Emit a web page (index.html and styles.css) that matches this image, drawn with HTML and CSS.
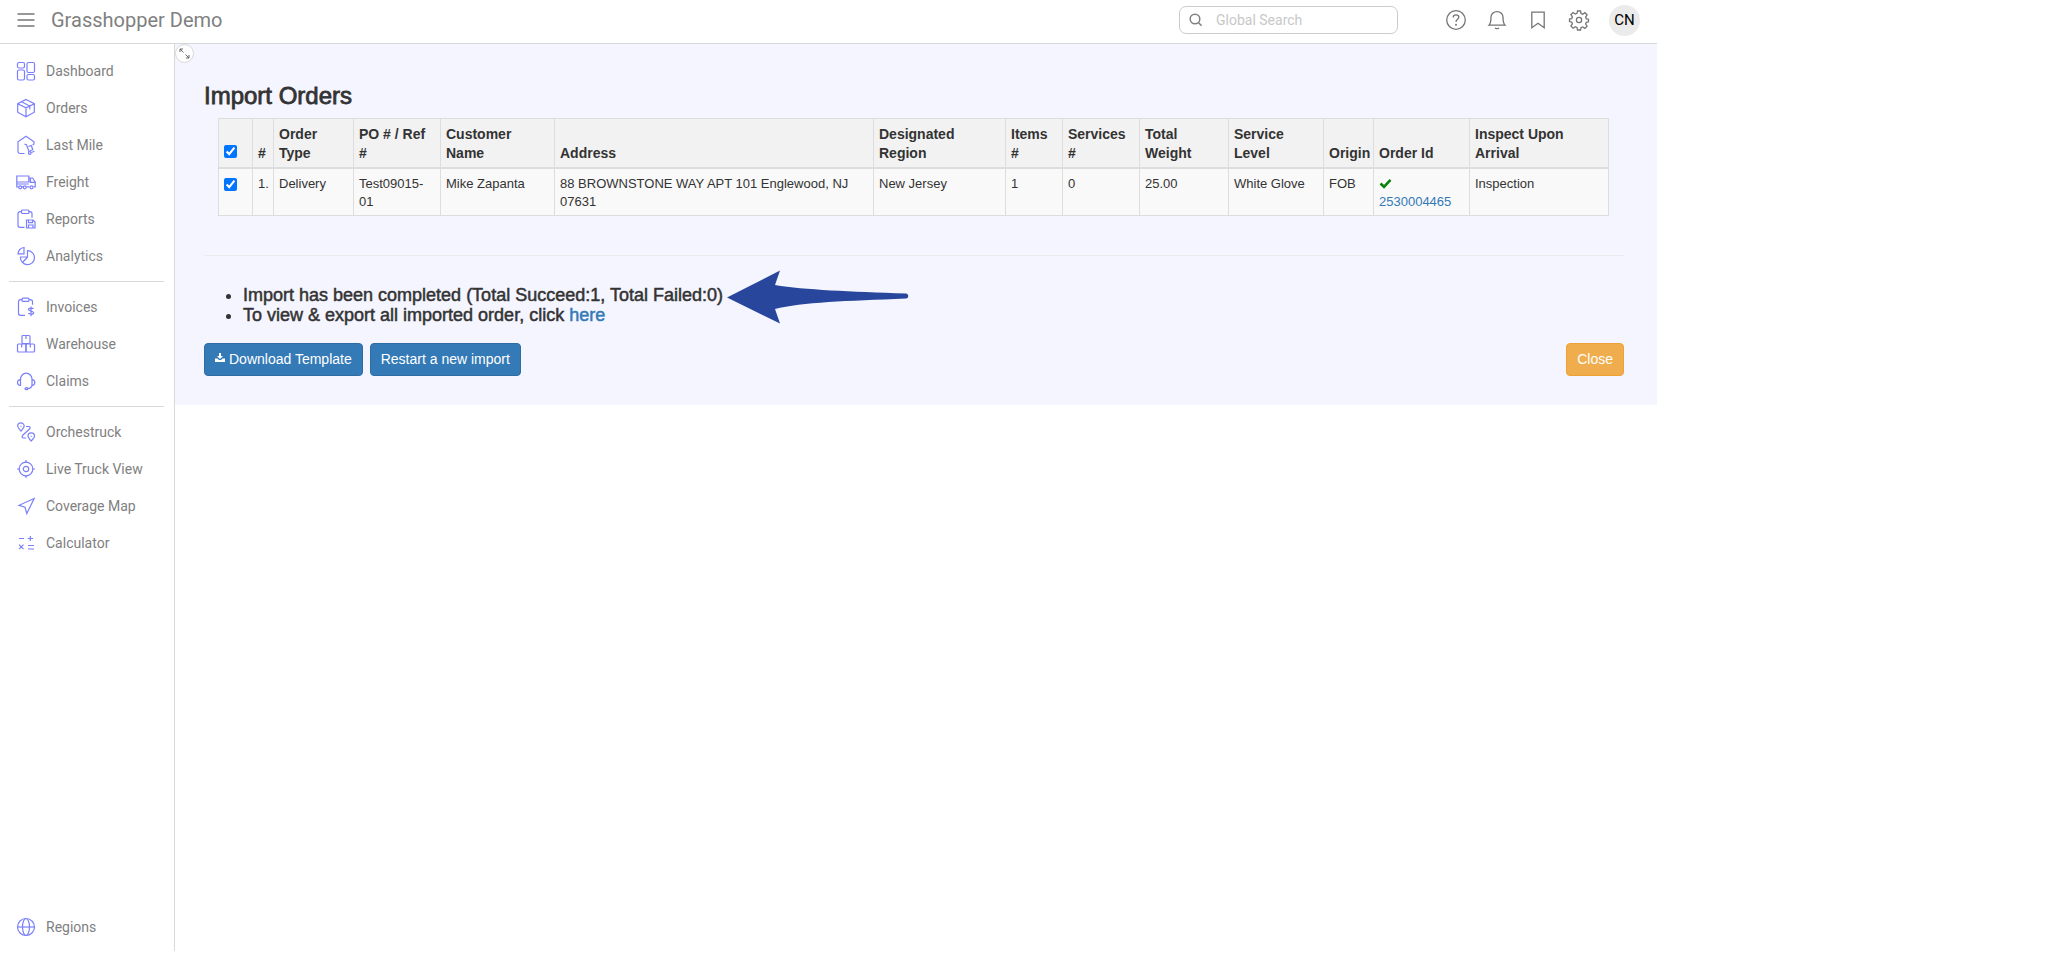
FILE: index.html
```html
<!DOCTYPE html>
<html lang="en">
<head>
<meta charset="utf-8">
<title>Grasshopper Demo - Import Orders</title>
<link rel="stylesheet" href="styles.css">
</head>
<body>
<div class="app">
  <header class="topbar">
    <button class="icon-btn menu-btn" aria-label="Menu"><svg width="18" height="16" viewBox="0 0 18 16"><path d="M0.5 2h17M0.5 8h17M0.5 14h17"/></svg></button>
    <span class="brand">Grasshopper Demo</span>
    <label class="search">
      <svg width="14" height="14" viewBox="0 0 14 14"><circle cx="6" cy="6" r="4.8"/><path d="M9.6 9.8l3 3"/></svg>
      <input type="text" placeholder="Global Search" aria-label="Global Search">
    </label>
    <nav class="tools" aria-label="Tools">
      <button class="icon-btn" aria-label="Help"><svg width="22" height="22" viewBox="0 0 22 22"><circle cx="11" cy="11" r="9.3"/><path d="M8.2 8.4c0-1.6 1.2-2.6 2.8-2.6s2.8 1 2.8 2.5c0 1.9-2.8 2.2-2.8 4.6"/><circle class="solid" cx="11" cy="15.8" r="1"/></svg></button>
      <button class="icon-btn" aria-label="Notifications"><svg width="22" height="22" viewBox="0 0 22 22"><path d="M3 16.2c1.700-1.700 2-3.500 2-8.200a6 5.300 0 0 1 12 0c0 4.700.3 6.500 2 8.200zM9 18.700c.5 1.200 3.500 1.200 4 0"/></svg></button>
      <button class="icon-btn" aria-label="Bookmarks"><svg width="22" height="22" viewBox="0 0 22 22"><path d="M4.800 3.200h12.400v15.600l-6.200-4.500-6.200 4.500z"/></svg></button>
      <button class="icon-btn" aria-label="Settings"><svg width="22" height="22" viewBox="0 0 22 22"><circle cx="11" cy="11" r="2.600"/><path d="M9.500 2h3l.5 2.500 1.700.7 2.200-1.500 2.200 2.200-1.500 2.200.7 1.700 2.200.4v2.600l-2.200.5-.7 1.700 1.500 2.200-2.200 2.200-2.200-1.500-1.700.7-.5 2.400h-3L9 18.400l-1.700-.7-2.200 1.500-2.200-2.200 1.500-2.200-.7-1.700-2.200-.5V10l2.200-.4.7-1.700-1.500-2.200 2.200-2.200 2.200 1.500L9 4.300z"/></svg></button>
    </nav>
    <button class="avatar">CN</button>
  </header>

  <div class="body">
    <nav class="sidebar" aria-label="Main">
      <a class="nav-link" href="#"><svg width="20" height="20" viewBox="0 0 20 20"><rect x="1.500" y="1.500" width="7" height="5.500" rx="1.500"/><rect x="1.500" y="9" width="7" height="10" rx="1.500"/><rect x="11" y="1.500" width="7.500" height="10" rx="1.500"/><rect x="11" y="13.500" width="7.500" height="5.500" rx="1.500"/></svg>Dashboard</a>
      <a class="nav-link" href="#"><svg width="20" height="20" viewBox="0 0 20 20"><path d="M10 1.500l8.300 4.200v8.500L10 18.800l-8.300-4.600V5.700zM1.700 5.700L10 9.800l8.300-4.100M10 9.800v9M5.500 3.800l8.300 4.200v3.500"/></svg>Orders</a>
      <a class="nav-link" href="#"><svg width="20" height="20" viewBox="0 0 20 20"><path d="M8.500 18.500H4A2 2 0 0 1 2 16.500V6.700L10 1.200l8 5.500V9M8.500 9.200l2 .5 2.700 7.300M12.500 11.500l2.800-1 1.500 4.200-2.800 1M15.300 17.500l3.200-1.200"/><circle cx="13.700" cy="18" r="1.300"/><path d="M16.500 10l1.800-.7"/></svg>Last Mile</a>
      <a class="nav-link" href="#"><svg width="20" height="20" viewBox="0 0 20 20"><path d="M.8 4h12v6H.8zM.8 10v4.800h1.700M6 14.800h1M10.500 14.800h3M13 10.500V6h3.500l2.700 4v4.800h-1.700M14.500 6.500v3.800h4.500M.8 12h12"/><circle cx="4.200" cy="15.300" r="1.500"/><circle cx="8.800" cy="15.300" r="1.500"/><circle cx="15.500" cy="15.300" r="1.500"/></svg>Freight</a>
      <a class="nav-link" href="#"><svg width="20" height="20" viewBox="0 0 20 20"><path d="M6 2.700H4a2 2 0 0 0-2 2v11.600a2 2 0 0 0 2 2h4.500M12.500 2.700h1.500a2 2 0 0 1 2 2v4"/><rect x="5.500" y="1" width="7.500" height="3.500" rx="1"/><path d="M10.500 11h6.500l2 2v6h-8.500zM12.500 11v2.700h4V11M12.500 19v-3h4.500v3"/></svg>Reports</a>
      <a class="nav-link" href="#"><svg width="20" height="20" viewBox="0 0 20 20"><path d="M8 1.500v6.300H2a6.500 6.500 0 0 1 6-6.300zM11.500 4.700v6.300h-7a7 7 0 1 0 7-6.300zM11.500 11l-4.500 5"/></svg>Analytics</a>
      <hr class="divider">
      <a class="nav-link" href="#"><svg width="20" height="20" viewBox="0 0 20 20"><path d="M6 2.700H4.500a2 2 0 0 0-2 2v11.600a2 2 0 0 0 2 2H9M13 2.700h1.500a2 2 0 0 1 2 2v3"/><rect x="6" y="1.200" width="7" height="3.200" rx="1"/><path d="M17.500 12c-.5-1-5-1.500-5 .5 0 2.200 5.200 1 5.200 3.300 0 2-4.700 1.700-5.400.3M15 9.500v9.700"/></svg>Invoices</a>
      <a class="nav-link" href="#"><svg width="20" height="20" viewBox="0 0 20 20"><rect x="6" y="1.500" width="8" height="8" rx="1"/><rect x="1.500" y="10" width="8.500" height="8" rx="1"/><rect x="10" y="10" width="8.500" height="8" rx="1"/><path d="M10 1.500v3.500M5.700 10v3.500M14.300 10v3.500"/></svg>Warehouse</a>
      <a class="nav-link" href="#"><svg width="20" height="20" viewBox="0 0 20 20"><path d="M4.500 8.500a5.700 6.300 0 0 1 11.500 0M4.500 8.500v6c-2-.2-3-1.500-3-3s1-2.800 3-3zM16 8.500v6c2-.2 2.800-1.500 2.800-3s-.8-2.800-2.800-3zM16 14.500c-.5 2-2.500 3-4.500 3"/><ellipse cx="10.500" cy="17.700" rx="1.500" ry="1"/></svg>Claims</a>
      <hr class="divider">
      <a class="nav-link" href="#"><svg width="20" height="20" viewBox="0 0 20 20"><path d="M5 9C3 6.700 1.700 5.500 1.700 4A3.200 3 0 0 1 8.200 4C8.200 5.500 7 6.700 5 9zM15.200 19c-2-2-3.200-3.300-3.200-4.900a3.200 3.100 0 0 1 6.500 0c0 1.600-1.200 2.900-3.300 4.900zM10 4.500h2.500c2 0 2 1.500 1 2.500L7 13c-1.500 1.500-1 3 .5 3h2.700"/><path d="M5 3.700v1M15.200 13.700v1"/></svg>Orchestruck</a>
      <a class="nav-link" href="#"><svg width="20" height="20" viewBox="0 0 20 20"><circle cx="10" cy="10" r="6.800"/><circle cx="10" cy="10" r="2.700"/><path d="M10 1v3M10 16v3M1 10h3M16 10h3"/></svg>Live Truck View</a>
      <a class="nav-link" href="#"><svg width="20" height="20" viewBox="0 0 20 20"><path d="M18.200 2.500L3 9.300l6 2 1.800 6.200z"/></svg>Coverage Map</a>
      <a class="nav-link" href="#"><svg width="20" height="20" viewBox="0 0 20 20"><path d="M3 5.500h5M11.700 5.500H17M14.300 3v5M3 11.700l4.500 4.500M7.500 11.700L3 16.200M12 12.500h6M12 16h6"/></svg>Calculator</a>
      <a class="nav-link nav-last" href="#"><svg width="20" height="20" viewBox="0 0 20 20"><circle cx="10" cy="10" r="8.500"/><ellipse cx="10" cy="10" rx="3.500" ry="8.500"/><path d="M1.500 10h17"/></svg>Regions</a>
    </nav>

    <main class="panel">
      <button class="expand" aria-label="Expand"><svg width="11" height="11" viewBox="0 0 11 11"><path d="M1 4V1h3M1 1l3.500 3.500M10 7v3H7M10 10L6.500 6.500"/></svg></button>
      <h1 class="title">Import Orders</h1>
      <div class="table-wrap">
        <table class="orders">
          <colgroup><col class="c-check"><col class="c-num"><col class="c-type"><col class="c-po"><col class="c-customer"><col><col class="c-region"><col class="c-items"><col class="c-services"><col class="c-weight"><col class="c-level"><col class="c-origin"><col class="c-id"><col class="c-inspect"></colgroup>
          <thead>
            <tr><th><input type="checkbox" checked aria-label="Select all"></th><th>#</th><th>Order Type</th><th>PO # / Ref #</th><th>Customer Name</th><th>Address</th><th>Designated Region</th><th>Items #</th><th>Services #</th><th>Total Weight</th><th>Service Level</th><th>Origin</th><th>Order Id</th><th>Inspect Upon Arrival</th></tr>
          </thead>
          <tbody>
            <tr><td><input type="checkbox" checked aria-label="Select order 1"></td><td>1.</td><td>Delivery</td><td>Test09015-01</td><td>Mike Zapanta</td><td>88 BROWNSTONE WAY APT 101 Englewood, NJ 07631</td><td>New Jersey</td><td>1</td><td>0</td><td>25.00</td><td>White Glove</td><td>FOB</td><td><svg class="ok" width="13" height="11" viewBox="0 0 13 11"><path d="M1.500 5.500l3.500 3.300 6.500-7"/></svg><a class="order-link" href="#">2530004465</a></td><td>Inspection</td></tr>
          </tbody>
        </table>
      </div>
      <hr class="rule">
      <ul class="results">
        <li><span class="result">Import has been completed (Total Succeed:1, Total Failed:0)<svg class="arrow" width="182" height="54" viewBox="0 0 182 54"><path d="M0 27.500L53 .5 48 15c30 5 75 6.500 131 8.500 3 .3 3 4.800 0 5C120 31 75 32 48 39l5 14.500z"/></svg></span></li>
        <li>To view &amp; export all imported order, click <a href="#">here</a></li>
      </ul>
      <div class="actions">
        <button class="btn primary"><svg class="dl" width="10" height="9" viewBox="0 0 10 9"><path d="M4 0h2v3h2L5 6 2 3h2zM0 5.500h2.500L4 7h2l1.500-1.500H10V9H0z"/></svg>Download Template</button>
        <button class="btn primary">Restart a new import</button>
        <button class="btn warning">Close</button>
      </div>
    </main>
  </div>
</div>
</body>
</html>
```
FILE: styles.css
```css
* { box-sizing: border-box; }

body {
  margin: 0;
  background: #fff;
  color: #333;
  font: 13px/18px "Liberation Sans", Arial, sans-serif;
}

a { color: #337ab7; text-decoration: none; }
button, input { font: inherit; }
svg { flex: none; fill: none; stroke: currentColor; }

.app {
  display: flex;
  flex-direction: column;
  max-width: 1657px;
  min-height: calc(100vh - 5px);
}

/* Top bar */
.topbar {
  display: flex;
  align-items: center;
  height: 44px;
  padding: 0 17px 3px;
  border-bottom: 1px solid #d5d8d8;
  color: #808080;
  font-family: Roboto, sans-serif;
}
.icon-btn {
  display: flex;
  padding: 0;
  border: 0;
  background: none;
  color: #757575;
}
.icon-btn svg { stroke-width: 1.3; }
.solid { fill: currentColor; stroke: none; }
.brand { margin-left: 16px; font-size: 20px; line-height: 24px; }
.search {
  display: flex;
  align-items: center;
  gap: 13px;
  width: 219px;
  height: 28px;
  margin-left: auto;
  padding: 0 9px;
  border: 1px solid #ccc;
  border-radius: 7px;
}
.search svg { stroke-width: 1.5; }
.search input {
  min-width: 0;
  flex: 1;
  padding: 0;
  border: 0;
  outline: 0;
  background: none;
  font-size: 14px;
}
.search input::placeholder { color: #c8c8c8; }
.tools { display: flex; gap: 19px; margin-left: 47px; }
.avatar {
  width: 31px;
  height: 31px;
  margin-left: 19px;
  padding: 0;
  border: 0;
  border-radius: 50%;
  background: #ebebeb;
  color: #000;
  font-size: 15px;
}

/* Sidebar */
.body { display: flex; flex: 1; align-items: stretch; }
.sidebar {
  display: flex;
  flex: none;
  flex-direction: column;
  width: 175px;
  padding: 8px 10px 6px 9px;
  border-right: 1px solid #d9d9dc;
}
.nav-link {
  display: flex;
  align-items: center;
  gap: 10px;
  height: 37px;
  padding-left: 7px;
  color: #808080;
  font: 14px/20px Roboto, sans-serif;
}
.nav-link svg { color: #7b7ffb; stroke-width: 1.2; }
.nav-last { margin-top: auto; }
.divider {
  width: 100%;
  margin: 7px 0 6px;
  border: 0;
  border-top: 1px solid #d9d9d9;
}

/* Content */
.panel {
  position: relative;
  flex: 1;
  align-self: flex-start;
  min-width: 0;
  padding: 38px 33px 29px 29px;
  background: #f5f5ff;
}
.expand {
  position: absolute;
  top: 0;
  left: 0;
  display: grid;
  place-items: center;
  width: 19px;
  height: 19px;
  padding: 0;
  border: 1px solid #d9d9d9;
  border-radius: 50%;
  background: #fff;
  color: #666;
}
.title {
  margin: 0 0 8px;
  font-size: 24px;
  font-weight: 400;
  line-height: 28px;
  -webkit-text-stroke: 0.8px currentColor;
}
.table-wrap { padding: 0 15px 0 14px; }
.orders {
  width: 100%;
  table-layout: fixed;
  border-collapse: collapse;
  background: #f9f9f9;
}
.orders th, .orders td {
  padding: 6px 5px 4px;
  border: 1px solid #ddd;
  text-align: left;
}
.orders th {
  background: #f2f2f2;
  border-bottom-width: 2px;
  font-size: 14px;
  line-height: 19px;
  vertical-align: bottom;
}
.orders td { vertical-align: top; }
.orders input { display: block; width: 13px; height: 13px; margin: 3px 0 5px; accent-color: #0075ff; }
.c-check { width: 34px; }
.c-num { width: 21px; }
.c-type { width: 80px; }
.c-po { width: 87px; }
.c-customer { width: 114px; }
.c-region { width: 132px; }
.c-items { width: 57px; }
.c-services { width: 77px; }
.c-weight { width: 89px; }
.c-level { width: 95px; }
.c-origin { width: 50px; }
.c-id { width: 96px; }
.c-inspect { width: 139px; }
.ok { display: block; margin: 3px 0 4px; color: #0a800a; stroke-width: 2.6; }
.order-link { display: block; }

.rule { margin: 39px 0 29px; border: 0; border-top: 1px solid #ebebee; }
.results {
  margin: 0 0 18px;
  padding-left: 39px;
  font-size: 18px;
  line-height: 20px;
  -webkit-text-stroke: 0.5px currentColor;
}
.result { position: relative; }
.arrow {
  position: absolute;
  top: -15px;
  left: 100%;
  margin-left: 4px;
  fill: #28469c;
  stroke: none;
}

.actions { display: flex; gap: 7px; }
.btn {
  display: flex;
  gap: 4px;
  padding: 6px 10px;
  border: 1px solid #2e6da4;
  border-radius: 4px;
  color: #fff;
  font-size: 14px;
  line-height: 19px;
}
.primary { background: #337ab7; }
.warning { margin-left: auto; border-color: #eea236; background: #f0ad4e; }
.dl { margin-top: 3px; fill: currentColor; stroke: none; }
```
